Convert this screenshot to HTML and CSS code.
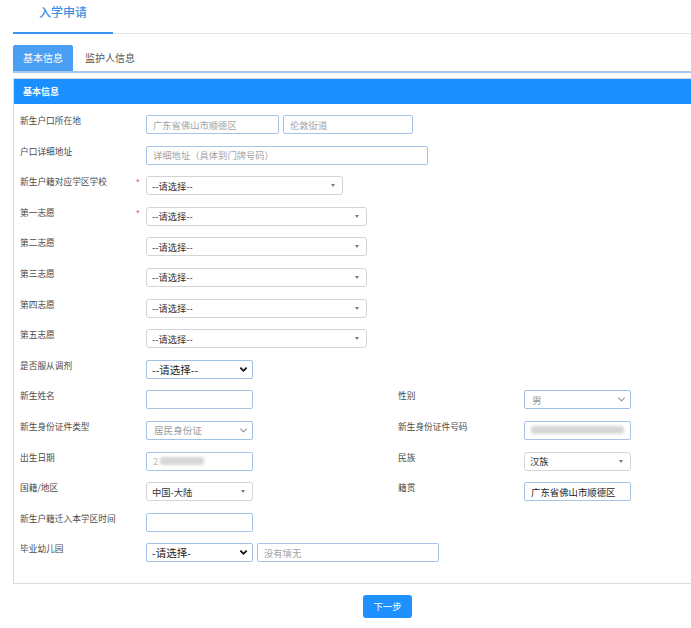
FILE: index.html
```html
<!DOCTYPE html>
<html lang="zh-CN">
<head>
    <meta charset="UTF-8">
    <meta name="viewport" content="width=device-width, initial-scale=1.0">
    <title>入学申请</title>
    <link rel="stylesheet" href="styles.css">
</head>
<body>
    <div class="page">
        <div class="nav">
            <a href="#" class="nav-item">入学申请</a>
        </div>

        <div class="tabs">
            <a href="#" class="tab active">基本信息</a>
            <a href="#" class="tab">监护人信息</a>
        </div>

        <div class="panel">
            <div class="panel-head">基本信息</div>
            <form class="form">
                <!-- address -->
                <label class="lbl">新生户口所在地</label>
                <div class="field wide">
                    <input type="text" class="ipt w133" placeholder="广东省佛山市顺德区">
                    <input type="text" class="ipt w130" placeholder="伦敦街道">
                </div>

                <label class="lbl">户口详细地址</label>
                <div class="field wide">
                    <input type="text" class="ipt w282" placeholder="详细地址（具体到门牌号码）">
                </div>

                <!-- school choices -->
                <label class="lbl">新生户籍对应学区学校<span class="req">*</span></label>
                <div class="field wide">
                    <div class="sel w197"><select><option>--请选择--</option></select><i class="caret"></i></div>
                </div>

                <label class="lbl">第一志愿<span class="req">*</span></label>
                <div class="field wide">
                    <div class="sel w221"><select><option>--请选择--</option></select><i class="caret"></i></div>
                </div>

                <label class="lbl">第二志愿</label>
                <div class="field wide">
                    <div class="sel w221"><select><option>--请选择--</option></select><i class="caret"></i></div>
                </div>

                <label class="lbl">第三志愿</label>
                <div class="field wide">
                    <div class="sel w221"><select><option>--请选择--</option></select><i class="caret"></i></div>
                </div>

                <label class="lbl">第四志愿</label>
                <div class="field wide">
                    <div class="sel w221"><select><option>--请选择--</option></select><i class="caret"></i></div>
                </div>

                <label class="lbl">第五志愿</label>
                <div class="field wide">
                    <div class="sel w221"><select><option>--请选择--</option></select><i class="caret"></i></div>
                </div>

                <label class="lbl">是否服从调剂</label>
                <div class="field wide">
                    <div class="sel native w107">
                        <select><option>--请选择--</option></select>
                        <svg class="chev" viewBox="0 0 10 7"><path d="M1.5 1.5l3.5 3.5 3.5-3.5"/></svg>
                    </div>
                </div>

                <!-- student -->
                <label class="lbl">新生姓名</label>
                <div class="field"><input type="text" class="ipt w107"></div>
                <label class="lbl">性别</label>
                <div class="field">
                    <div class="sel native off w107">
                        <select disabled><option>男</option></select>
                        <svg class="chev" viewBox="0 0 10 7"><path d="M1.5 1.5l3.5 3.5 3.5-3.5"/></svg>
                    </div>
                </div>

                <label class="lbl">新生身份证件类型</label>
                <div class="field">
                    <div class="sel native off w107">
                        <select disabled><option>居民身份证</option></select>
                        <svg class="chev" viewBox="0 0 10 7"><path d="M1.5 1.5l3.5 3.5 3.5-3.5"/></svg>
                    </div>
                </div>
                <label class="lbl">新生身份证件号码</label>
                <div class="field">
                    <div class="ipt masked w107"><span class="blur long"></span></div>
                </div>

                <label class="lbl">出生日期</label>
                <div class="field">
                    <div class="ipt masked w107">2<span class="blur"></span></div>
                </div>
                <label class="lbl">民族</label>
                <div class="field">
                    <div class="sel w107"><select><option>汉族</option></select><i class="caret"></i></div>
                </div>

                <label class="lbl">国籍/地区</label>
                <div class="field">
                    <div class="sel w107"><select><option>中国-大陆</option></select><i class="caret"></i></div>
                </div>
                <label class="lbl">籍贯</label>
                <div class="field">
                    <input type="text" class="ipt w107 filled" value="广东省佛山市顺德区">
                </div>

                <label class="lbl">新生户籍迁入本学区时间</label>
                <div class="field wide"><input type="text" class="ipt w107"></div>

                <label class="lbl">毕业幼儿园</label>
                <div class="field wide">
                    <div class="sel native w107">
                        <select><option>-请选择-</option></select>
                        <svg class="chev" viewBox="0 0 10 7"><path d="M1.5 1.5l3.5 3.5 3.5-3.5"/></svg>
                    </div>
                    <input type="text" class="ipt w182" placeholder="没有填无">
                </div>
            </form>
        </div>

        <div class="actions">
            <a href="#" class="button">下一步</a>
        </div>
    </div>
</body>
</html>
```

FILE: styles.css
```css
* {
    margin: 0;
    padding: 0;
    box-sizing: border-box;
}

html, body {
    overflow: hidden;
}

body {
    background: #fff;
    color: #333;
    font-family: "Noto Sans CJK SC", "Noto Sans", sans-serif;
    font-size: 9.3px;
}

a {
    text-decoration: none;
}

.page {
    width: 749px;
    margin-left: 13px;
}

/* top nav */
.nav {
    height: 34px;
    border-bottom: 1px solid #e6e6e6;
}

.nav-item {
    display: block;
    width: 100px;
    height: 34px;
    padding-top: 3px;
    text-align: center;
    color: #3c91e6;
    font-size: 12px;
    line-height: 18px;
    font-weight: 500;
    border-bottom: 2px solid #3b94f0;
}

/* tabs */
.tabs {
    display: flex;
    margin-top: 11px;
    border-bottom: 2px solid #a9c8e9;
}

.tab {
    height: 26px;
    line-height: 26px;
    padding: 0 12px 0 11px;
    color: #555;
    font-size: 10px;
    font-weight: 400;
}

.tab.active {
    width: 60px;
    padding: 0;
    text-align: center;
    color: #fff;
    background: #4b9ff2;
    border-radius: 2px 2px 0 0;
    margin-right: 1px;
}

/* panel */
.panel {
    margin-top: 5px;
    border: 1px solid #dcdcdc;
}

.panel-head {
    height: 25px;
    line-height: 25px;
    padding-left: 9px;
    background: #1a8fff;
    color: #fff;
    font-size: 9px;
    font-weight: 700;
}

.form {
    display: grid;
    grid-template-columns: 126px 252px 126px 1fr;
    grid-auto-rows: 19px;
    row-gap: 11.6px;
    padding: 11px 0 21px 6px;
}

.lbl {
    display: flex;
    justify-content: space-between;
    padding-right: 6px;
    line-height: 12px;
    color: #4a4a4a;
    font-size: 8.7px;
    font-weight: 400;
}

.lbl .req {
    color: #e86060;
    font-size: 9px;
    line-height: 14px;
}

.field {
    display: flex;
    gap: 4px;
}

.field.wide {
    grid-column: 2 / span 3;
}

/* inputs */
.ipt {
    height: 19px;
    padding: 0 6px;
    border: 1px solid #a6c4e7;
    border-radius: 2px;
    background: #fff;
    color: #333;
    font-family: inherit;
    font-size: 9.3px;
    line-height: 17px;
    outline: 0;
}

.ipt::placeholder {
    color: #a3a3a3;
}

.ipt.filled {
    color: #222;
    font-size: 9.4px;
}

.ipt.masked {
    display: flex;
    align-items: center;
    color: #bbb;
}

.blur {
    display: block;
    width: 44px;
    height: 8px;
    margin-left: 2px;
    background: #d6d6d6;
    border-radius: 3px;
    filter: blur(1.5px);
}

.blur.long {
    width: 94px;
    margin-left: 0;
}

.w107 { width: 107px; }
.w130 { width: 130px; }
.w133 { width: 133px; }
.w182 { width: 182px; }
.w197 { width: 197px; }
.w221 { width: 221px; }
.w282 { width: 282px; }

/* selects */
.sel {
    position: relative;
    height: 19px;
}

.sel select {
    width: 100%;
    height: 19px;
    padding: 0 16px 0 5px;
    appearance: none;
    -webkit-appearance: none;
    border: 1px solid #d4d4d4;
    border-radius: 3px;
    background: #fff;
    color: #333;
    font-family: inherit;
    font-size: 9.3px;
    outline: 0;
    opacity: 1;
}

.sel .caret {
    position: absolute;
    right: 8px;
    top: 8px;
    width: 0;
    height: 0;
    border-left: 2.5px solid transparent;
    border-right: 2.5px solid transparent;
    border-top: 3px solid #7a7a7a;
}

.sel.native select {
    border-color: #9fc1e6;
    border-radius: 2px;
    color: #222;
    font-size: 10.5px;
    padding-left: 5px;
}

.sel .chev {
    position: absolute;
    right: 5px;
    top: 6px;
    width: 9px;
    height: 7px;
    fill: none;
    stroke: #111;
    stroke-width: 2;
}

.sel.off select,
.sel.off select:disabled {
    color: #9a9a9a;
    background: #fff;
    border-color: #9fc1e6;
    font-size: 9.6px;
    padding-left: 7px;
}

.sel.off .chev {
    stroke: #9a9a9a;
    stroke-width: 1.3;
}

/* footer */
.actions {
    padding-top: 11px;
    text-align: center;
}

.button {
    display: inline-block;
    width: 49px;
    height: 23px;
    line-height: 23px;
    background: #1e90ff;
    border-radius: 3px;
    color: #fff;
    font-size: 9.3px;
}
```
